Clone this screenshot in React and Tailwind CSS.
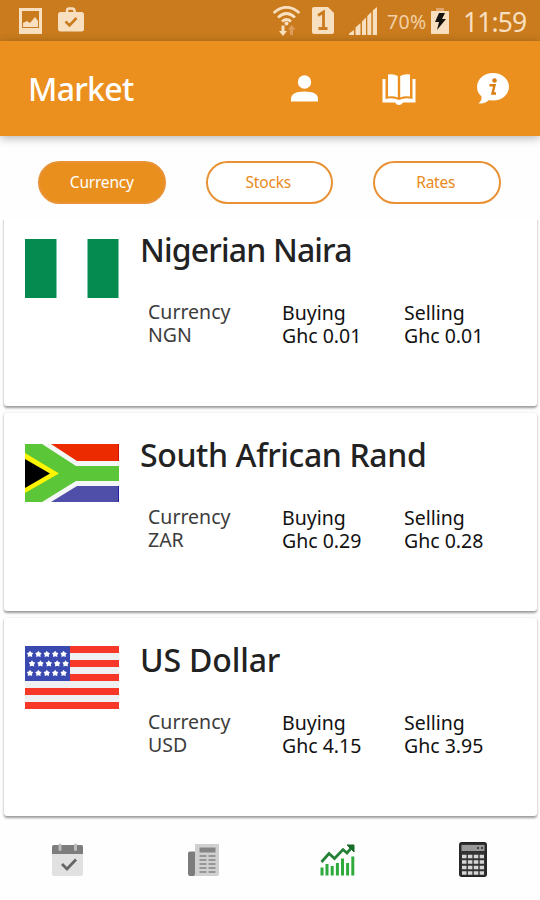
import React, { useState } from 'react';

const tabs = ['Currency', 'Stocks', 'Rates'];

const currencies = [
  { name: 'Nigerian Naira', code: 'NGN', buying: '0.01', selling: '0.01', Flag: NigeriaFlag, tracking: 'tracking-[-0.85px]' },
  { name: 'South African Rand', code: 'ZAR', buying: '0.29', selling: '0.28', Flag: SouthAfricaFlag, tracking: 'tracking-[-0.38px]' },
  { name: 'US Dollar', code: 'USD', buying: '4.15', selling: '3.95', Flag: UsaFlag, tracking: 'tracking-[-0.15px]' },
];

function NigeriaFlag() {
  return (
    <svg width="94" height="59" viewBox="0 0 94 59" className="mt-[24px]">
      <path d="M0 0h31.500v59H0zM62.500 0h31v59h-31z" fill="#058a50" />
    </svg>
  );
}

function SouthAfricaFlag() {
  return (
    <svg width="94" height="58" viewBox="0 0 94 58" className="mt-[23.500px]">
      <rect width="94" height="58" fill="#f5f7f7" />
      <path d="M26 0H94V17H52Z" fill="#ec2b00" />
      <path d="M26 58H94V42H52Z" fill="#4f4ea8" />
      <path d="M93 0h1v17h-1z" fill="#c81400" />
      <path d="M93 42h1v16h-1z" fill="#2020a0" />
      <path d="M0 0H17L51 22H94V37H51L17 58H0Z" fill="#5ac638" />
      <path d="M0 9L34 29.500L0 49Z" fill="#fff500" />
      <path d="M0 15L25 29.500L0 44Z" fill="#000" />
    </svg>
  );
}

function UsaFlag() {
  const stars = [];
  for (let row = 0; row < 3; row++) {
    for (let col = 0; col < 5; col++) {
      stars.push([5 + col * 8.4 + (row === 1 ? 2 : 0), 8 + row * 9.5]);
    }
  }
  return (
    <svg width="94" height="63" viewBox="0 0 94 63" className="mt-[21px]">
      <rect width="94" height="63" fill="#eff0f2" />
      <path d="M0 0h94v7H0zM0 14h94v7H0zM0 28h94v7H0zM0 42h94v7H0zM0 56h94v7H0z" fill="#f73829" />
      <rect width="45" height="35" fill="#3a49b0" />
      {stars.map(([x, y]) => (
        <path
          key={`${x}-${y}`}
          transform={`translate(${x} ${y})`}
          d="M0-3.200L1.200-1.400L3.200-.9L2 .9L2.200 3L0 2.300L-2.200 3L-2 .9L-3.200-.9L-1.200-1.400Z"
          fill="#fff"
        />
      ))}
    </svg>
  );
}

function StatusBar() {
  return (
    <div className="flex h-[41px] shrink-0 items-center bg-[#c97b1d] text-[#f8dfc0]">
      <svg width="23" height="26" viewBox="0 0 23 26" className="ml-[19px]" fill="currentColor">
        <path fillRule="evenodd" d="M0 0H23V26H0ZM3 3V20H20V3Z" />
        <path d="M4 19V15L8 13L11 15L16 9L19 13V19Z" />
      </svg>
      <svg width="26" height="25" viewBox="0 0 26 25" className="mb-[3px] ml-4" fill="none">
        <path d="M9 6V4Q9 1.500 11 1.500H14Q16.500 1.500 16.500 4V6" stroke="currentColor" strokeWidth="2.500" />
        <rect y="5" width="26" height="19.500" rx="2.500" fill="currentColor" />
        <path d="M7.500 14.500L11.500 18.500L18.500 11" stroke="#c97b1d" strokeWidth="2.600" />
      </svg>
      <svg width="27" height="30" viewBox="0 0 27 30" className="ml-[189px]" fill="none" stroke="currentColor">
        <path d="M0.500 7Q13.500-4.500 26.500 7M5 11.500Q13.500 3.500 22 11.500M9 15.500Q13.500 11.500 18 15.500" strokeWidth="2.700" />
        <circle cx="13.500" cy="17.500" r="2" fill="currentColor" stroke="none" />
        <path d="M8.500 19.500H11.500V25H14L10 30L6 25H8.500Z" fill="currentColor" stroke="none" />
        <path d="M18.500 19L22.500 23.500H20V29H17V23.500H15Z" fill="#df9d5a" stroke="none" />
      </svg>
      <svg width="22" height="27" viewBox="0 0 22 27" className="ml-3">
        <path d="M2 0H16L22 6V25Q22 27 20 27H2Q0 27 0 25V2Q0 0 2 0Z" fill="currentColor" />
        <path d="M6 8.500L11.500 5V21.500M6.500 21.500H15.500" fill="none" stroke="#c97b1d" strokeWidth="2.800" />
      </svg>
      <svg width="28" height="28" viewBox="0 0 28 28" className="ml-[15px]" fill="currentColor">
        <path d="M0 28V26.500L5 23V28ZM6.500 28V20.500L11.500 16V28ZM13 28V14.500L17 10.500V28ZM18.300 28V9L22.300 5V28ZM23.800 28V3.500L28 0V28Z" />
      </svg>
      <span className="ml-[10px] w-[41px] whitespace-nowrap pt-[2px] text-[19.500px] leading-none tracking-[0.300px] text-[#f2cfa5]">70%</span>
      <svg width="18" height="26" viewBox="0 0 18 26" className="ml-[3px]">
        <path d="M5 0H13V3H18V26H0V3H5Z" fill="currentColor" />
        <path d="M5 0H13V3H5Z" fill="#e2a66a" />
        <path d="M8 5L14 5L11 11H15L6 22L8 14H4Z" fill="#16130e" />
      </svg>
      <span className="ml-[14px] whitespace-nowrap pt-[3px] text-[26.500px] leading-none tracking-[-0.900px]">11:59</span>
    </div>
  );
}

function Header() {
  return (
    <header className="relative z-10 flex h-[95px] shrink-0 items-center bg-[#eb901e] text-white shadow-[0_2px_9px_rgba(0,0,0,0.3)]">
      <h1 className="ml-7 w-[263px] text-[32px] font-medium leading-none tracking-[-0.700px]">Market</h1>
      <svg width="27" height="27" viewBox="0 0 27 27" fill="currentColor">
        <circle cx="13.500" cy="7" r="6.700" />
        <path d="M0 26.500V24Q0 16.500 13.500 16.500Q27 16.500 27 24V26.500Z" />
      </svg>
      <svg width="34" height="31" viewBox="0 0 34 31" className="ml-[64px] mt-px" fill="currentColor">
        <path d="M6 0.500Q12-.2 15.800 2V23.500Q11 21.500 6 22.500ZM28 .5Q22-.2 18.200 2V23.500Q23 21.500 28 22.500Z" />
        <path d="M0.500 5H3.500V25Q11 23.300 17 26Q23 23.300 30.500 25V5H33.500V28.500H21Q19.500 31 17 31Q14.500 31 13 28.500H0.500Z" />
      </svg>
      <svg width="32" height="31" viewBox="0 0 32 31" className="ml-[61px] mb-px">
        <path d="M16 0C24.800 0 32 6 32 13.500C32 21.500 25 27.500 16.500 27.500Q14 27.500 12 27Q7.500 31.500 1.500 30.200Q5 28 4.500 23.500Q0 19.500 0 14C0 6 7.200 0 16 0Z" fill="currentColor" />
        <circle cx="17.500" cy="7.500" r="2.300" fill="#d97d14" />
        <path d="M12.500 12.300H17.500L15.500 20.500H19" fill="none" stroke="#d97d14" strokeWidth="2.400" />
      </svg>
    </header>
  );
}

function CurrencyCard({ name, code, buying, selling, Flag, tracking }) {
  return (
    <div className="flex h-[198px] shrink-0 rounded-[3px] bg-white shadow-[0_1.500px_2.500px_rgba(0,0,0,0.4)]">
      <div className="ml-[21px] w-[115px] pt-[7px]">
        <Flag />
      </div>
      <div className="pt-[24px]">
        <h2 className={`whitespace-nowrap text-[32px] font-medium leading-[36px] text-[#222] ${tracking}`}>{name}</h2>
        <div className="mt-[34px] flex pl-2 text-[19.500px] leading-[22.500px]">
          <div className="-mt-px w-[134px] text-[#3c3c3c]">
            <p>Currency</p>
            <p>{code}</p>
          </div>
          <div className="w-[122px] text-[#111]">
            <p>Buying</p>
            <p>Ghc {buying}</p>
          </div>
          <div className="text-[#111]">
            <p>Selling</p>
            <p>Ghc {selling}</p>
          </div>
        </div>
      </div>
    </div>
  );
}

function BottomNav() {
  return (
    <nav className="flex h-[80px] shrink-0 items-start bg-[#fefefe] pt-[22px]">
      <svg width="33" height="34" viewBox="0 0 33 34" className="ml-[51px]">
        <rect x="1" y="3" width="31" height="31" rx="2" fill="#e1e1e1" />
        <path d="M3 3H30Q32 3 32 5V12H1V5Q1 3 3 3Z" fill="#7d7d7d" />
        <path d="M9 3V7.500M24.500 3V7.500" stroke="#bdbdbd" strokeWidth="3" strokeLinecap="round" />
        <path d="M11 22L16 27L25 17.500" fill="none" stroke="#666" strokeWidth="2.800" />
      </svg>
      <svg width="32" height="34" viewBox="0 0 32 34" className="ml-[103px]">
        <path d="M1 11Q1 9.500 3 9.500H8V34H3Q1 34 1 31.500Z" fill="#7c7c7c" />
        <path d="M8 2H32V32Q32 34 30 34H7Q8 33 8 31Z" fill="#d0d0d0" />
        <rect x="12.500" y="5.500" width="16" height="5" fill="#858585" />
        <path d="M12.500 14h7M21.500 14h7M12.500 18h7M21.500 18h7M12.500 22h7M21.500 22h7M12.500 26h7M21.500 26h7M12.500 30h7M21.500 30h7" stroke="#979797" strokeWidth="2" />
      </svg>
      <svg width="35" height="32" viewBox="0 0 35 32" className="ml-[101px] mt-[2px]" fill="none">
        <path d="M1.500 18L9 9.500L14.500 14.500L23 5.500L27 9L33 2" stroke="#238034" strokeWidth="2.700" />
        <path d="M27 1H34V8Z" fill="#176c28" stroke="#176c28" />
        <path d="M2 31.500V23.500M7 31.500V20M12.200 31.500V22M17.400 31.500V19M22.500 31.500V14.500M27.600 31.500V19M32.800 31.500V12.500" stroke="#2eaa3c" strokeWidth="3" />
      </svg>
      <svg width="28" height="35" viewBox="0 0 28 35" className="ml-[104px]">
        <rect x=".8" y=".8" width="26.400" height="33.400" rx="2" fill="#333" stroke="#222" strokeWidth="1.500" />
        <rect x="2.500" y="3" width="23" height="6" fill="#999" />
        <path d="M18 6h2M22 6h2" stroke="#444" strokeWidth="2" />
        <path d="M3 14.500H25M3 20H25M3 25.500H25M3 31H25" stroke="#d6d6d6" strokeWidth="3.600" strokeDasharray="4.500 1.400" />
      </svg>
    </nav>
  );
}

export default function App() {
  const [active, setActive] = useState('Currency');

  return (
    <div className="flex h-[900px] w-[540px] flex-col overflow-hidden bg-[#fefefe] font-['Noto_Sans',sans-serif]">
      <StatusBar />
      <Header />

      <div className="flex h-[84px] shrink-0 gap-10 pl-[38px] pt-[25px]">
        {tabs.map((tab) => (
          <button
            key={tab}
            onClick={() => setActive(tab)}
            className={`h-[43px] w-[127.500px] rounded-full border-2 border-[#e99235] pt-px text-[15.500px] tracking-[-0.200px] ${
              active === tab ? 'bg-[#e98f1e] text-white' : 'bg-white pr-0.5 text-[#e98a22]'
            }`}
          >
            {tab}
          </button>
        ))}
      </div>

      {/* List is scrolled a little, so the first card is cut at the top */}
      <div className="flex h-[600px] shrink-0 flex-col justify-end gap-[7px] overflow-hidden pb-1 pl-1 pr-[3px]">
        {currencies.map((item) => (
          <CurrencyCard key={item.code} {...item} />
        ))}
      </div>

      <BottomNav />
    </div>
  );
}
